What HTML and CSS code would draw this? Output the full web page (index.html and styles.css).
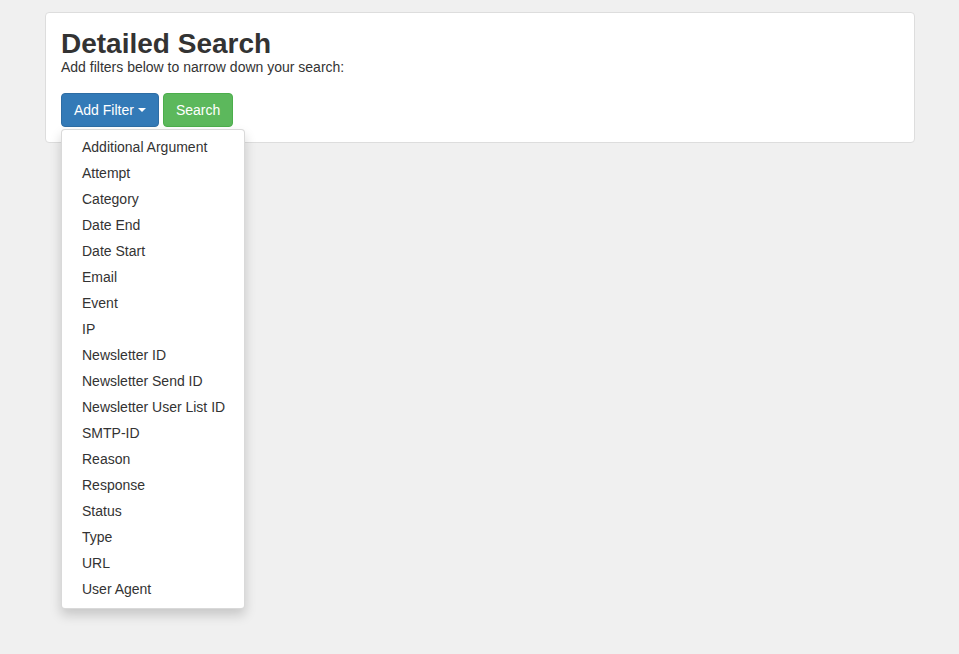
FILE: index.html
```html
<!DOCTYPE html>
<html>
<head>
<meta charset="utf-8">
<link rel="stylesheet" href="styles.css">
</head>
<body>
<div class="page">
  <div class="panel">
    <h1 class="title">Detailed Search</h1>
    <p class="subtitle">Add filters below to narrow down your search:</p>
    <div class="actions">
      <div class="dropdown">
        <button class="btn btn-primary">Add Filter <span class="caret"></span></button>
        <ul class="menu">
          <li>Additional Argument</li>
          <li>Attempt</li>
          <li>Category</li>
          <li>Date End</li>
          <li>Date Start</li>
          <li>Email</li>
          <li>Event</li>
          <li>IP</li>
          <li>Newsletter ID</li>
          <li>Newsletter Send ID</li>
          <li>Newsletter User List ID</li>
          <li>SMTP-ID</li>
          <li>Reason</li>
          <li>Response</li>
          <li>Status</li>
          <li>Type</li>
          <li>URL</li>
          <li>User Agent</li>
        </ul>
      </div>
      <button class="btn btn-success">Search</button>
    </div>
  </div>
</div>
</body>
</html>
```
FILE: styles.css
```css
* { box-sizing: border-box; }
html, body {
  margin: 0;
  padding: 0;
  background: #f0f0f0;
  font-family: "Liberation Sans", Arial, sans-serif;
  font-size: 14px;
  line-height: 1.42857;
  color: #333;
}
body {
  min-height: 100vh;
}
.page {
  padding: 12px 44px 0 45px;
  min-height: 100vh;
}
.panel {
  background: #fff;
  border: 1px solid #ddd;
  border-radius: 4px;
  padding: 15px;
  width: 870px;
  overflow: visible;
}
.title {
  margin: 0;
  font-size: 28px;
  font-weight: bold;
  line-height: 32px;
}
.subtitle {
  margin: 0 0 18px 0;
  line-height: 15px;
}
.actions {
  display: flex;
  gap: 4px;
  overflow: visible;
}
.dropdown {
  position: relative;
  overflow: visible;
}
.btn {
  font-family: inherit;
  font-size: 14px;
  line-height: 20px;
  padding: 6px 12px;
  border: 1px solid transparent;
  border-radius: 4px;
  color: #fff;
  cursor: pointer;
  display: inline-flex;
  align-items: center;
}
.btn-primary {
  background: #337ab7;
  border-color: #2e6da4;
}
.btn-success {
  background: #5cb85c;
  border-color: #4cae4c;
}
.caret {
  display: inline-block;
  width: 0;
  height: 0;
  margin-left: 4px;
  border-top: 4px solid #fff;
  border-left: 4px solid transparent;
  border-right: 4px solid transparent;
}
.menu {
  position: absolute;
  top: 100%;
  left: 0;
  margin: 2px 0 0;
  padding: 5px 0;
  list-style: none;
  width: 184px;
  background: #fff;
  border: 1px solid rgba(0,0,0,.15);
  border-radius: 4px;
  box-shadow: 0 6px 12px rgba(0,0,0,.175);
  z-index: 10;
}
.menu li {
  padding: 2px 20px 4px;
  line-height: 20px;
  color: #333;
  white-space: nowrap;
}
```
